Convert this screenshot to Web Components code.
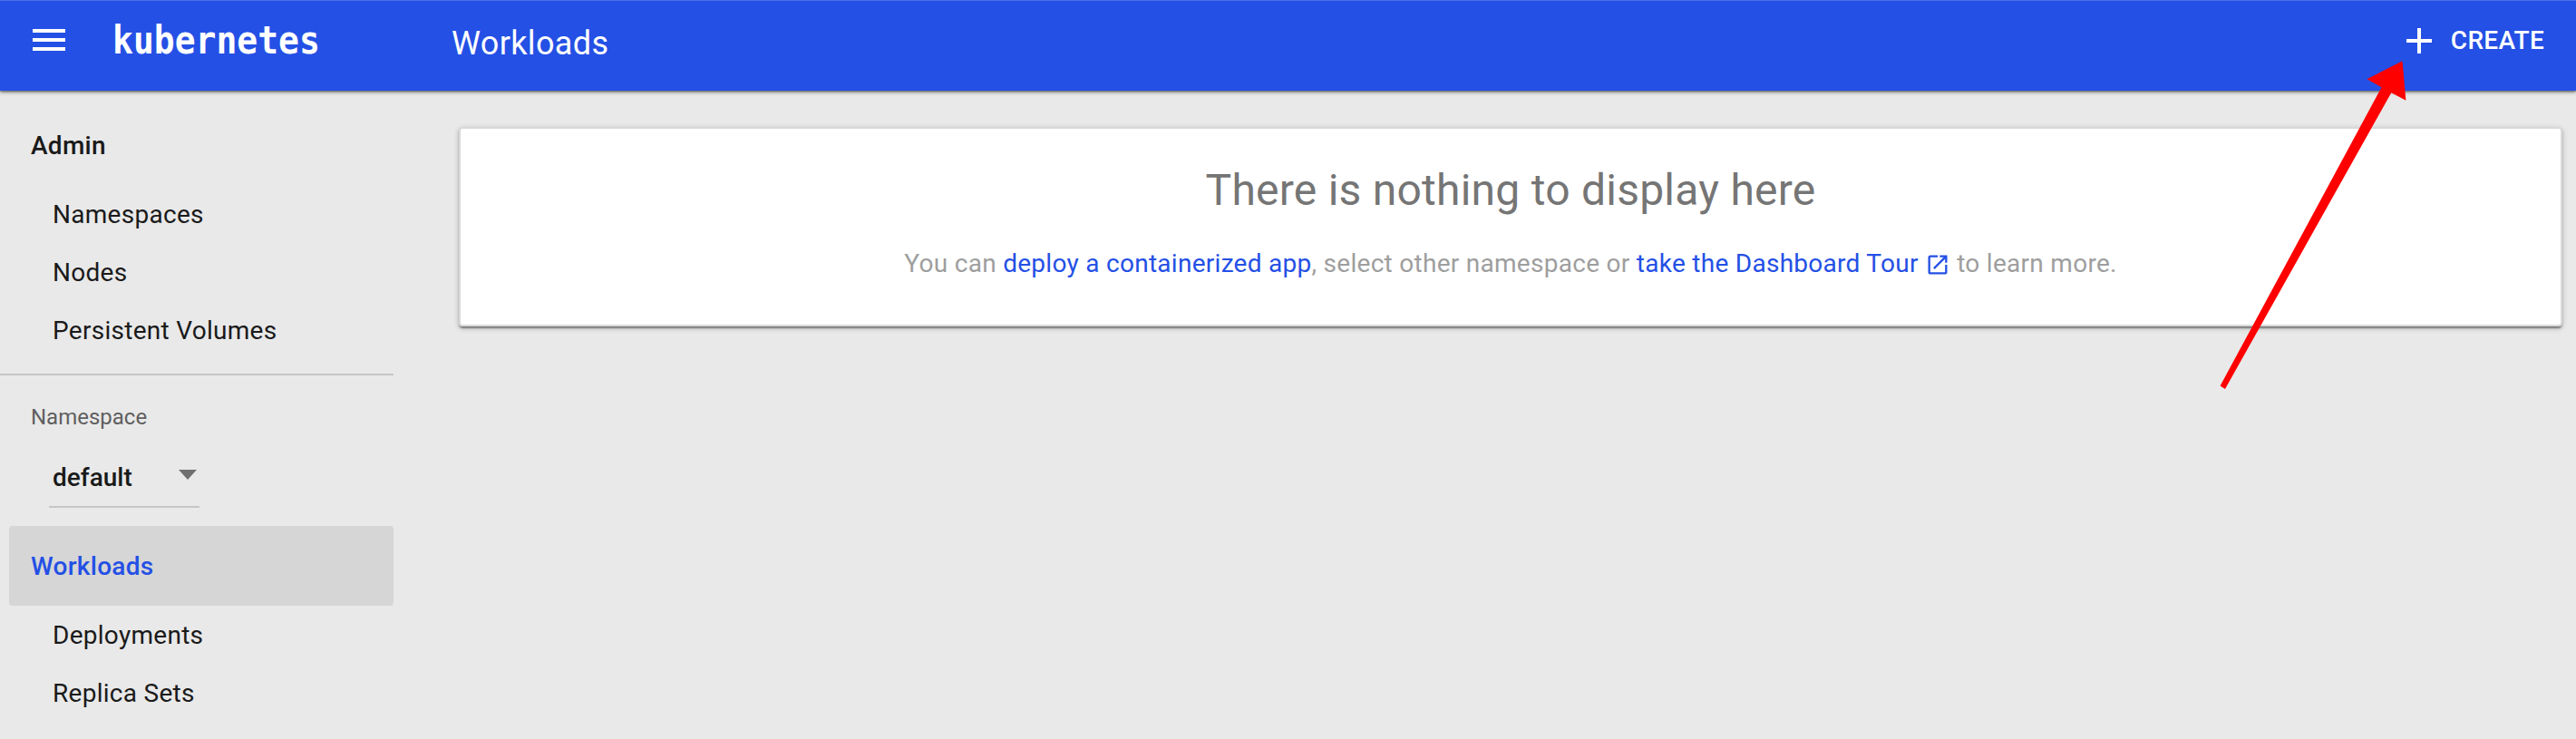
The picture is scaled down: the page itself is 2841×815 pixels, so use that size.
<!DOCTYPE html>
<html lang="en">
<head>
<meta charset="utf-8">
<title>Workloads - Kubernetes Dashboard</title>
<style>
html,body{margin:0;height:100%;overflow:hidden}
body{font-family:Roboto,sans-serif;font-size:28px;color:#1a1a1a;background:#e9e9e9;letter-spacing:.01em}
</style>
</head>
<body>
<kd-app></kd-app>
<script>
const define = (name, html) => {
  const template = document.createElement('template');
  template.innerHTML = html;
  customElements.define(name, class extends HTMLElement {
    constructor() {
      super();
      this.attachShadow({mode: 'open'}).append(template.content.cloneNode(true));
    }
  });
};

define('kd-header', `
<style>
:host{display:flex;align-items:flex-start;box-sizing:border-box;height:100px;width:100%;background:#2450e5;color:#fff;border-top:1px solid #4971e8;box-shadow:0 2px 4px rgba(0,0,0,.35),0 1px 2px rgba(0,0,0,.4);position:relative;z-index:1}
svg{display:block;flex:none;fill:#fff}
.menu{margin:19px 0 0 30px}
.logo{margin:18px 0 0 46px;width:374px;font:bold 42px/52px "DejaVu Sans Mono",monospace;letter-spacing:0}
.logo span{display:inline-block;transform:scaleX(.905);transform-origin:0 0}
.title{flex:1;font-size:36px;line-height:44px;margin-top:25px;letter-spacing:.01em}
.create{display:flex;align-items:flex-start;font-weight:500;margin:19px 35px 0 0;line-height:50px;letter-spacing:.01em}
.create svg{margin:1px 11px 0 0}
</style>
<svg class="menu" width="48" height="48" viewBox="0 0 24 24"><path d="M3 18h18v-2H3v2zm0-5h18v-2H3v2zm0-7v2h18V6H3z"/></svg>
<div class="logo"><span>kubernetes</span></div>
<div class="title"><slot></slot></div>
<div class="create"><svg width="48" height="48" viewBox="0 0 24 24"><path d="M19 13h-6v6h-2v-6H5v-2h6V5h2v6h6v2z"/></svg><span>CREATE</span></div>
`);

define('kd-nav-item', `
<style>
:host{display:block;box-sizing:border-box;height:64px;line-height:64px;padding:1px 0 0 58px;white-space:nowrap}
:host([group]){height:88px;line-height:88px;padding-left:24px;margin-left:10px;font-weight:500;border-radius:4px}
:host([active]){background:#d6d6d6;color:#2450e5}
</style><slot></slot>`);

define('kd-namespace', `
<style>
:host{display:block;padding:32px 0 20px;border-top:2px solid #c6c6c6;letter-spacing:0}
.label{font-size:24px;line-height:28px;margin-left:34px;color:#5f5f5f}
.select{display:flex;align-items:flex-start;justify-content:space-between;box-sizing:border-box;width:166px;height:72px;margin:14px 0 0 54px;padding:0 3px 0 4px;border-bottom:2px solid #c6c6c6;font-weight:500;line-height:36px}
.select span{margin-top:21px}
i{margin-top:30px;border:10.5px solid transparent;border-top:11px solid #6f6f6f;border-bottom:0}
</style>
<div class="label">Namespace</div>
<div class="select"><span><slot></slot></span><i></i></div>`);

define('kd-sidebar', `
<style>
:host{display:block;width:434px;padding-top:16px;flex:none}
.admin{padding-bottom:16px}
</style>
<div class="admin">
<kd-nav-item group>Admin</kd-nav-item>
<kd-nav-item>Namespaces</kd-nav-item>
<kd-nav-item>Nodes</kd-nav-item>
<kd-nav-item>Persistent Volumes</kd-nav-item>
</div>
<kd-namespace>default</kd-namespace>
<kd-nav-item group active>Workloads</kd-nav-item>
<kd-nav-item>Deployments</kd-nav-item>
<kd-nav-item>Replica Sets</kd-nav-item>`);

define('kd-empty-card', `
<style>
:host{display:block;box-sizing:border-box;height:220px;background:#fff;border:2px solid #d9d9d9;border-radius:4px;text-align:center;box-shadow:0 2px 6px rgba(0,0,0,.2),0 2px 2px rgba(0,0,0,.25),0 4px 2px -2px rgba(0,0,0,.2)}
h1{margin:38px 0 0;font-weight:400;font-size:48px;line-height:60px;color:#757575;letter-spacing:.24px}
p{margin:33px 0 0;line-height:36px;color:#9e9e9e}
a{color:#2450e5}
svg{fill:#2450e5;vertical-align:-6px}
</style>
<h1>There is nothing to display here</h1>
<p>You can <a>deploy a containerized app</a>, select other namespace or <a>take the Dashboard Tour <svg width="28" height="28" viewBox="0 0 24 24"><path d="M19 19H5V5h7V3H5c-1.11 0-2 .9-2 2v14c0 1.1.89 2 2 2h14c1.1 0 2-.9 2-2v-7h-2v7zM14 3v2h3.59l-9.83 9.83 1.41 1.41L19 6.41V10h2V3h-7z"/></svg></a> to learn more.</p>`);

define('kd-arrow', `
<style>
:host{position:absolute;left:2440px;top:60px;z-index:2;pointer-events:none}
svg{display:block}
</style>
<svg width="220" height="375" viewBox="2440 60 220 375"><path fill="#f00" d="M2649.5 67.3 2653.4 110.7 2637.3 102.3 2454 429 2448.6 425.6 2626.5 96.3 2610.5 87.3z"/></svg>`);

define('kd-app', `
<style>
:host{display:block;position:relative;height:815px;overflow:hidden}
main{display:flex}
kd-empty-card{flex:1;margin:40px 15px 0 72px}
</style>
<kd-header>Workloads</kd-header>
<main><kd-sidebar></kd-sidebar><kd-empty-card></kd-empty-card></main>
<kd-arrow></kd-arrow>`);
</script>
</body>
</html>
